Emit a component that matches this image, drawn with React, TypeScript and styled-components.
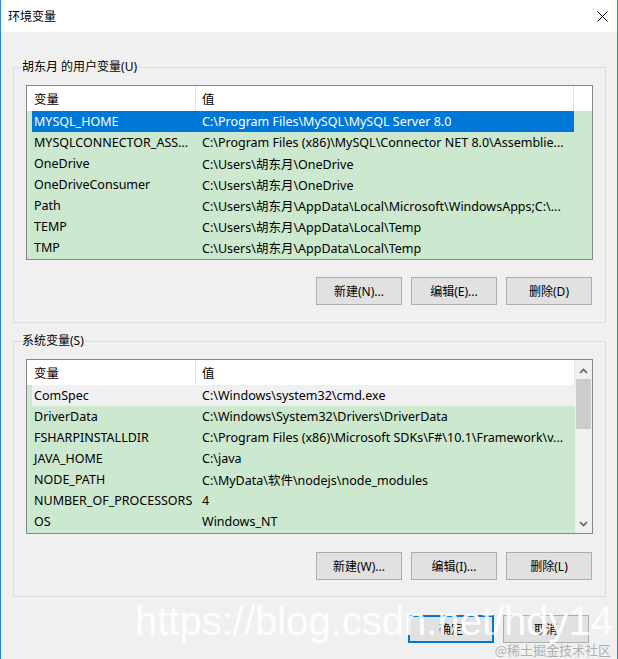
import React from "react";
import styled, { createGlobalStyle } from "styled-components";

const GlobalStyle = createGlobalStyle`
  html, body {
    margin: 0;
    padding: 0;
    background: #f0f0f0;
  }
  body {
    font-family: "Noto Sans", "Noto Sans CJK SC", sans-serif;
    font-size: 12px;
    color: #000;
  }
`;

const Window = styled.div`
  position: relative;
  width: 618px;
  height: 659px;
  box-sizing: border-box;
  border-left: 1px solid #2a86d8;
  border-right: 1px solid #2a86d8;
  background: #f0f0f0;
  display: flex;
  flex-direction: column;
  overflow: hidden;
`;

const TitleBar = styled.div`
  height: 32px;
  flex-shrink: 0;
  box-sizing: border-box;
  background: #fff;
  display: flex;
  align-items: center;
  justify-content: space-between;
  padding: 0 9px 0 7px;
`;

const Title = styled.span`
  font-size: 12px;
`;

const Content = styled.div`
  display: flex;
  flex-direction: column;
  padding: 27px 11px 0 12px;
`;

const Group = styled.fieldset<{ $gap?: number; $bottom?: number }>`
  margin: ${({ $gap }) => $gap ?? 0}px 0 0 0;
  padding: 10px 12px ${({ $bottom }) => $bottom ?? 16}px 12px;
  border: 1px solid #dcdcdc;
  min-width: 0;
`;

const Legend = styled.legend`
  margin-left: -5px;
  padding: 0 1px;
  line-height: 16px;
  font-size: 12px;
`;

const List = styled.div`
  height: 175px;
  box-sizing: border-box;
  border: 1px solid #828790;
  background: #cce8cf;
  display: flex;
  font-size: 12.5px;
`;

const ListMain = styled.div`
  flex: 1;
  min-width: 0;
  display: flex;
  flex-direction: column;
`;

const Header = styled.div`
  height: 25px;
  flex-shrink: 0;
  display: flex;
  background: #fff;
`;

const HeaderCell = styled.div<{ $w?: number }>`
  box-sizing: border-box;
  width: ${({ $w }) => ($w ? `${$w}px` : "auto")};
  flex: ${({ $w }) => ($w ? "none" : "1")};
  padding-left: ${({ $w }) => ($w ? 7 : 6)}px;
  border-right: 1px solid #e5e5e5;
  display: flex;
  align-items: center;
`;

const HeaderFill = styled.div`
  width: 18px;
  flex-shrink: 0;
`;

const Rows = styled.div<{ $fill?: boolean }>`
  display: flex;
  flex-direction: column;
  margin-right: ${({ $fill }) => ($fill ? 18 : 0)}px;
`;

const Row = styled.div<{ $state?: "selected" | "hover" }>`
  height: 21px;
  margin-left: 5px;
  display: flex;
  align-items: center;
  white-space: nowrap;
  background: ${({ $state }) =>
    $state === "selected" ? "#0078d7" : $state === "hover" ? "#f0f0f0" : "transparent"};
  color: ${({ $state }) => ($state === "selected" ? "#fff" : "#000")};
`;

const NameCell = styled.div`
  width: 163px;
  flex-shrink: 0;
  box-sizing: border-box;
  padding-left: 2px;
  overflow: hidden;
`;

const ValueCell = styled.div`
  flex: 1;
  min-width: 0;
  padding-left: 7px;
  overflow: hidden;
`;

const ScrollBar = styled.div`
  width: 17px;
  flex-shrink: 0;
  background: #f0f0f0;
  display: flex;
  flex-direction: column;
  align-items: center;
  padding: 8px 0 6px;
  box-sizing: border-box;
`;

const Thumb = styled.div`
  width: 15px;
  height: 50px;
  margin-top: 5px;
  background: #cdcdcd;
`;

const ScrollSpacer = styled.div`
  flex: 1;
`;

const ButtonRow = styled.div<{ $top: number; $right?: number }>`
  display: flex;
  justify-content: flex-end;
  gap: 9px;
  margin-top: ${({ $top }) => $top}px;
  padding-right: ${({ $right }) => $right ?? 1}px;
`;

const Button = styled.button<{ $primary?: boolean }>`
  width: 86px;
  height: 28px;
  box-sizing: border-box;
  margin: 0;
  padding: 0;
  font-family: "Noto Sans", "Noto Sans CJK SC", sans-serif;
  font-size: 12px;
  color: #000;
  background: #e1e1e1;
  border: ${({ $primary }) => ($primary ? "2px solid #0078d7" : "1px solid #adadad")};
`;

const Watermark = styled.div`
  position: absolute;
  left: 134px;
  top: 599px;
  font-family: "Liberation Sans", Arial, sans-serif;
  font-size: 40px;
  color: rgba(255, 255, 255, 0.92);
  white-space: nowrap;
  pointer-events: none;
`;

const Credit = styled.div`
  position: absolute;
  right: 6px;
  bottom: 0;
  font-family: "Noto Sans CJK SC", sans-serif;
  font-size: 13px;
  color: #b0b0b0;
  white-space: nowrap;
`;

type Variable = { name: string; value: string; state?: "selected" | "hover" };

const userVars: Variable[] = [
  { name: "MYSQL_HOME", value: "C:\\Program Files\\MySQL\\MySQL Server 8.0", state: "selected" },
  { name: "MYSQLCONNECTOR_ASS...", value: "C:\\Program Files (x86)\\MySQL\\Connector NET 8.0\\Assemblie..." },
  { name: "OneDrive", value: "C:\\Users\\胡东月\\OneDrive" },
  { name: "OneDriveConsumer", value: "C:\\Users\\胡东月\\OneDrive" },
  { name: "Path", value: "C:\\Users\\胡东月\\AppData\\Local\\Microsoft\\WindowsApps;C:\\..." },
  { name: "TEMP", value: "C:\\Users\\胡东月\\AppData\\Local\\Temp" },
  { name: "TMP", value: "C:\\Users\\胡东月\\AppData\\Local\\Temp" },
];

const systemVars: Variable[] = [
  { name: "ComSpec", value: "C:\\Windows\\system32\\cmd.exe", state: "hover" },
  { name: "DriverData", value: "C:\\Windows\\System32\\Drivers\\DriverData" },
  { name: "FSHARPINSTALLDIR", value: "C:\\Program Files (x86)\\Microsoft SDKs\\F#\\10.1\\Framework\\v..." },
  { name: "JAVA_HOME", value: "C:\\java" },
  { name: "NODE_PATH", value: "C:\\MyData\\软件\\nodejs\\node_modules" },
  { name: "NUMBER_OF_PROCESSORS", value: "4" },
  { name: "OS", value: "Windows_NT" },
];

const CloseIcon = () => (
  <svg width="11" height="11" viewBox="0 0 11 11">
    <path d="M0.5 0.5 L10.5 10.5 M10.5 0.5 L0.5 10.5" stroke="#000" strokeWidth="1" />
  </svg>
);

const Chevron = ({ down }: { down?: boolean }) => (
  <svg width="9" height="6" viewBox="0 0 9 6">
    <path
      d={down ? "M1 1 L4.5 4.5 L8 1" : "M1 5 L4.5 1.5 L8 5"}
      fill="none"
      stroke="#606060"
      strokeWidth="1.6"
    />
  </svg>
);

const VarList = ({ items, scroll }: { items: Variable[]; scroll?: boolean }) => (
  <List>
    <ListMain>
      <Header>
        <HeaderCell $w={169}>变量</HeaderCell>
        <HeaderCell>值</HeaderCell>
        {!scroll && <HeaderFill />}
      </Header>
      <Rows $fill={!scroll}>
        {items.map((item) => (
          <Row key={item.name} $state={item.state}>
            <NameCell>{item.name}</NameCell>
            <ValueCell>{item.value}</ValueCell>
          </Row>
        ))}
      </Rows>
    </ListMain>
    {scroll && (
      <ScrollBar>
        <Chevron />
        <Thumb />
        <ScrollSpacer />
        <Chevron down />
      </ScrollBar>
    )}
  </List>
);

export default function App() {
  return (
    <>
      <GlobalStyle />
      <Window>
        <TitleBar>
          <Title>环境变量</Title>
          <CloseIcon />
        </TitleBar>
        <Content>
          <Group $bottom={17}>
            <Legend>胡东月 的用户变量(U)</Legend>
            <VarList items={userVars} />
            <ButtonRow $top={17}>
              <Button>新建(N)...</Button>
              <Button>编辑(E)...</Button>
              <Button>删除(D)</Button>
            </ButtonRow>
          </Group>
          <Group $gap={10}>
            <Legend>系统变量(S)</Legend>
            <VarList items={systemVars} scroll />
            <ButtonRow $top={18}>
              <Button>新建(W)...</Button>
              <Button>编辑(I)...</Button>
              <Button>删除(L)</Button>
            </ButtonRow>
          </Group>
          <ButtonRow $top={18} $right={17}>
            <Button $primary>确定</Button>
            <Button>取消</Button>
          </ButtonRow>
        </Content>
        <Watermark>https://blog.csdn.net/hdy14</Watermark>
        <Credit>@稀土掘金技术社区</Credit>
      </Window>
    </>
  );
}
